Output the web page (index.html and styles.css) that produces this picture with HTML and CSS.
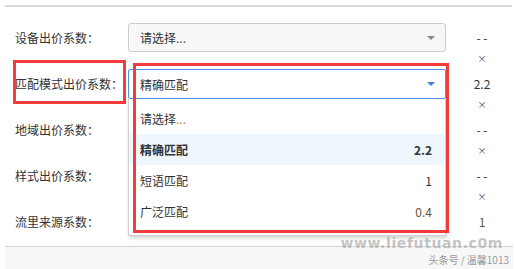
FILE: index.html
```html
<!DOCTYPE html>
<html lang="zh">
<head>
<meta charset="utf-8">
<link rel="stylesheet" href="styles.css">
</head>
<body>
<div class="page">
  <div class="topline"></div>
  <div class="form">
    <div class="row">
      <div class="label">设备出价系数：</div>
      <div class="select-wrap">
        <div class="select">
          <span class="sel-text">请选择<span class="dots-gray">...</span></span>
          <span class="arrow"></span>
        </div>
      </div>
      <div class="val"><span class="num">- -</span><span class="x">×</span></div>
    </div>
    <div class="row">
      <div class="label">匹配模式出价系数：</div>
      <div class="redbox label-box"></div>
      <div class="select-wrap">
        <div class="select open">
          <span class="sel-text">精确匹配</span>
          <span class="arrow blue"></span>
        </div>
        <div class="dropdown">
          <div class="item"><span>请选择<span class="dots">...</span></span></div>
          <div class="item active"><span>精确匹配</span><span>2.2</span></div>
          <div class="item"><span>短语匹配</span><span class="n">1</span></div>
          <div class="item"><span>广泛匹配</span><span class="n warm">0.4</span></div>
        </div>
        <div class="redbox drop-box"></div>
      </div>
      <div class="val"><span class="num">2.2</span><span class="x">×</span></div>
    </div>
    <div class="row">
      <div class="label">地域出价系数：</div>
      <div class="select-wrap"></div>
      <div class="val"><span class="num">- -</span><span class="x">×</span></div>
    </div>
    <div class="row">
      <div class="label">样式出价系数：</div>
      <div class="select-wrap"></div>
      <div class="val"><span class="num">- -</span><span class="x">×</span></div>
    </div>
    <div class="row">
      <div class="label">流里来源系数：</div>
      <div class="select-wrap"></div>
      <div class="val"><span class="num warm">1</span></div>
    </div>
  </div>
  <div class="footer">
    <span class="wm">www.liefutuan.c0m</span>
    <span class="credit">头条号 / 温馨1013</span>
  </div>
</div>
</body>
</html>
```
FILE: styles.css
```css
html, body {
  margin: 0;
  padding: 0;
  background: #fff;
}
body {
  font-family: "Noto Sans CJK SC", "Liberation Sans", sans-serif;
  font-size: 12px;
  color: #333;
  width: 516px;
  height: 269px;
  overflow: hidden;
}
.page {
  position: relative;
  height: 269px;
}
.topline {
  margin: 5px 4px 0 5px;
  height: 0;
  border-top: 2px solid #d9d9d9;
}
.form {
  padding-top: 8px;
  height: 231px;
}
.row {
  position: relative;
  display: flex;
  align-items: flex-start;
  height: 46px;
}
.label {
  flex: 0 0 128px;
  padding-left: 15px;
  box-sizing: border-box;
  height: 46px;
  line-height: 46px;
  white-space: nowrap;
}
.select-wrap {
  position: relative;
  flex: 0 0 318px;
  margin-top: 8px;
}
.select {
  height: 29px;
  box-sizing: border-box;
  border: 1px solid #cccccc;
  border-radius: 3px;
  background: #f7f7f7;
  display: flex;
  align-items: center;
  justify-content: space-between;
  padding: 0 10px 0 11px;
}
.select.open {
  height: 30px;
  background: #fff;
  border-color: #4f92ea;
  border-radius: 2px;
}
.dots-gray {
  color: #556;
}
.dots {
  color: #c98a3c;
}
.arrow {
  width: 0;
  height: 0;
  border-left: 4px solid transparent;
  border-right: 4px solid transparent;
  border-top: 4px solid #888;
}
.arrow.blue {
  border-top-color: #3f7fe6;
}
.dropdown {
  position: absolute;
  left: 0;
  top: 30px;
  width: 318px;
  box-sizing: border-box;
  height: 137px;
  background: #fff;
  border: 1px solid #cfcfcf;
  border-top: none;
  box-shadow: 1px 2px 4px rgba(0, 0, 0, 0.18);
  padding: 4px 0 0;
}
.item {
  height: 31px;
  display: flex;
  align-items: center;
  justify-content: space-between;
  padding: 0 13px 0 11px;
}
.item.active {
  background: #eef6fe;
  font-weight: bold;
}
.n.warm, .num.warm {
  color: #6b5530;
}
.redbox {
  position: absolute;
  border: 3px solid #f23b3b;
  box-sizing: border-box;
  pointer-events: none;
}
.label-box {
  left: 13px;
  top: -1px;
  width: 113px;
  height: 44px;
}
.drop-box {
  left: 5px;
  top: -6px;
  width: 316px;
  height: 170px;
}
.val {
  flex: 0 0 60px;
  margin-left: 6px;
  padding-top: 13px;
  display: flex;
  flex-direction: column;
  align-items: center;
}
.num {
  line-height: 20px;
  height: 20px;
}
.x {
  font-size: 9px;
  line-height: 22px;
  height: 20px;
  color: #3a3a5a;
}
.footer {
  position: relative;
  margin: 0 3px 0 5px;
  border-top: 1px solid #d4d4d4;
  background: #f7f7f7;
  height: 24px;
}
.wm {
  position: absolute;
  right: 10px;
  top: -12px;
  font-family: "DejaVu Sans", sans-serif;
  font-weight: bold;
  font-size: 14px;
  letter-spacing: 0.6px;
  color: rgba(170, 170, 170, 0.7);
  white-space: nowrap;
}
.credit {
  position: absolute;
  right: 4px;
  top: 5px;
  font-size: 10px;
  color: #9a9a9a;
  white-space: nowrap;
}
```
